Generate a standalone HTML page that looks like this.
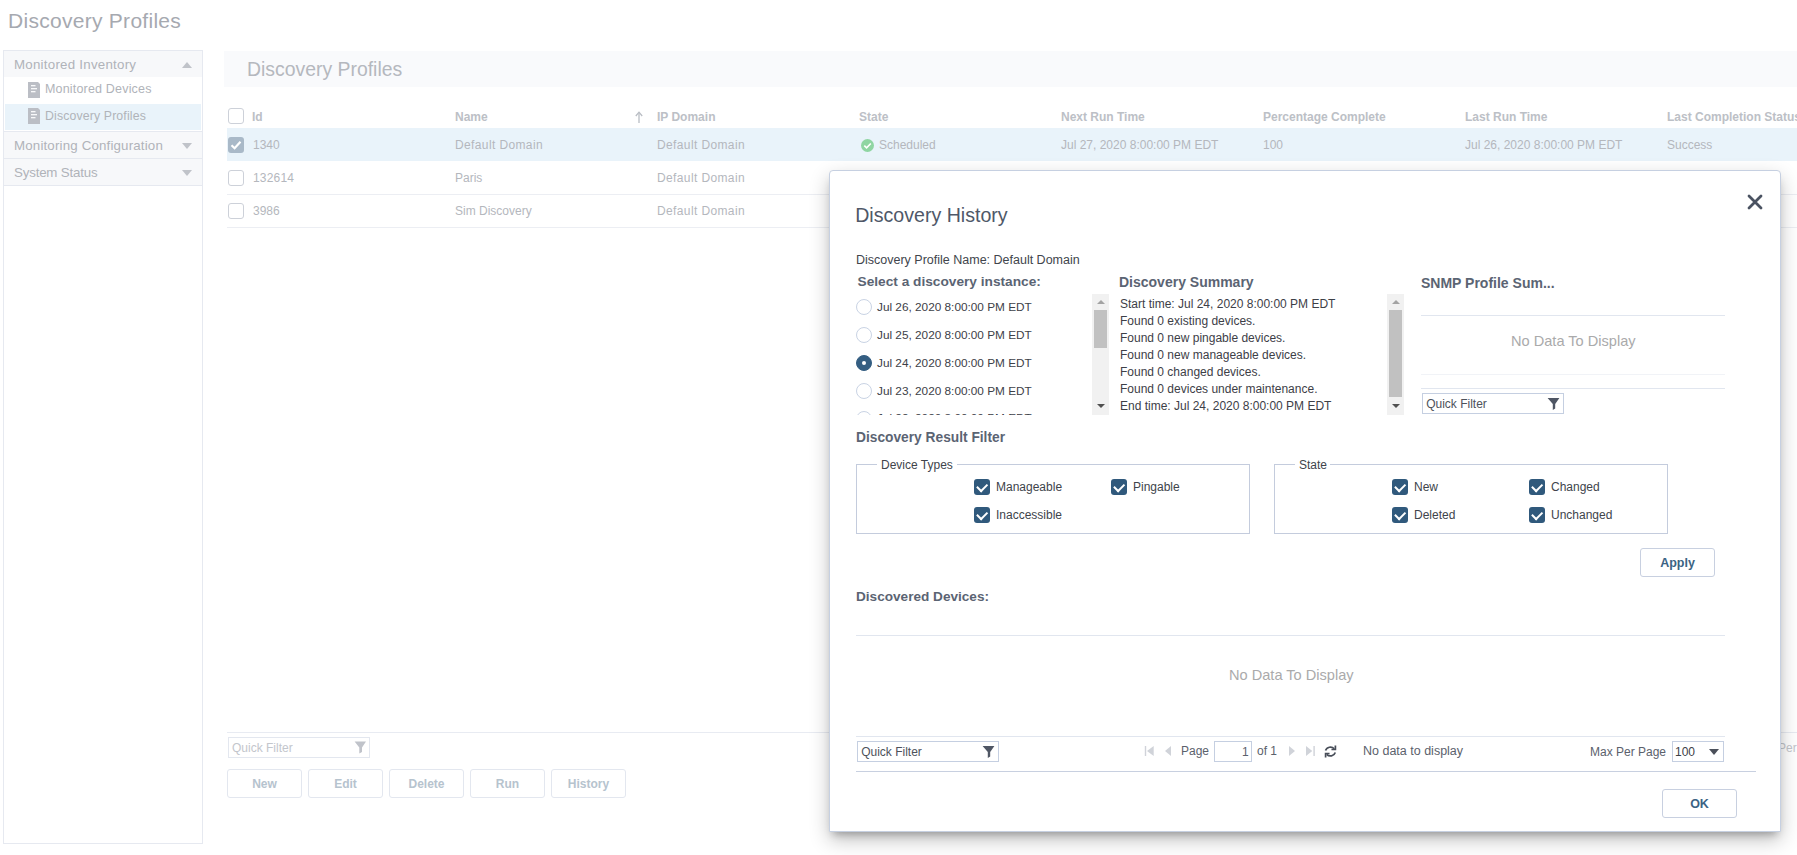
<!DOCTYPE html>
<html><head><meta charset="utf-8">
<style>
*{box-sizing:border-box;margin:0;padding:0}
html,body{width:1797px;height:855px;overflow:hidden;background:#fff;font-family:"Liberation Sans",sans-serif;position:relative}
.a{position:absolute}
.t{position:absolute;white-space:nowrap;line-height:1}
.bg{color:#b4b7bd}
.hd{color:#bcc0c6;font-weight:700}
.cb{position:absolute;width:16px;height:16px;border:1px solid #cdd1d9;border-radius:3px;background:#fff}
.hl{position:absolute;height:1px;background:#eceef3}
.doc{position:absolute;width:12px;height:16px;background:#c3c5cb;border-radius:1px}
.doc i{position:absolute;left:3px;height:2px;background:#fff}
.tri{position:absolute;width:0;height:0;border-left:5px solid transparent;border-right:5px solid transparent}
.btn{position:absolute;height:29px;border:1px solid #e3e7ef;border-radius:3px;color:#b6c3ce;font-weight:700;font-size:12px;text-align:center;line-height:28px;background:#fff}

.rd{position:absolute;width:16px;height:16px;border-radius:50%;border:1px solid #c9d3e4;background:#fff}
.rd.on{background:#345e82;border-color:#345e82}
.dt{font-size:11.8px;color:#3d4148}
.sb{position:absolute;width:17px;background:#f1f1f1}
.sb .th{position:absolute;left:2px;width:13px;background:#c1c1c1}
.sb .ua{position:absolute;left:4.5px;top:6px;width:0;height:0;border-left:4px solid transparent;border-right:4px solid transparent;border-bottom:4px solid #a3a3a3}
.sb .da{position:absolute;left:4.5px;bottom:7px;width:0;height:0;border-left:4px solid transparent;border-right:4px solid transparent;border-top:4px solid #505050}
.ml{position:absolute;height:1px;background:#e1e6ef}
.nd{font-size:14.6px;color:#aaaaab}
.qf{position:absolute;height:21px;border:1px solid #c5cfe1;background:#fff}
.qf span{position:absolute;left:3.2px;top:4.4px;font-size:12px;line-height:1;color:#4d525b;white-space:nowrap}
.qf .fi{position:absolute;right:2px;top:3px}
.fs{position:absolute;border:1px solid #c4ccdd}
.lb{font-size:12px;color:#40444b}
.ck{position:absolute;width:16px;height:16px;border-radius:3px;background:#30597c}
.ck:after{content:"";position:absolute;left:3px;top:3.5px;width:8px;height:4.5px;border-left:2.3px solid #fff;border-bottom:2.3px solid #fff;transform:rotate(-45deg)}
.mb{position:absolute;border:1px solid #c8d0e0;border-radius:3px;background:#fff;color:#3b6383;font-weight:700;font-size:12.5px;text-align:center;line-height:28px}
.pg{font-size:12px;color:#5b616c}
</style></head><body>

<!-- page title -->
<div class="t" style="left:8px;top:10px;font-size:21px;letter-spacing:0.28px;color:#a6a9b0">Discovery Profiles</div>

<!-- sidebar -->
<div class="a" style="left:3px;top:50px;width:200px;height:794px;border:1px solid #e6e9f0;background:#fff"></div>
<div class="a" style="left:4px;top:51px;width:198px;height:26px;background:#f7f8fa"></div>
<div class="t" style="left:14px;top:57.8px;font-size:13.3px;letter-spacing:0.25px;color:#b0b3b9">Monitored Inventory</div>
<div class="tri" style="left:182px;top:62px;border-bottom:6px solid #c0c3c9"></div>
<svg class="a" style="left:28px;top:82px" width="12" height="16" viewBox="0 0 12 16"><path d="M0 0 H10 L12 2 V16 H0 Z" fill="#bbbec5"/><rect x="3" y="3.1" width="4.5" height="1.2" fill="#fff"/><rect x="3" y="6.1" width="6" height="1.2" fill="#fff"/><rect x="3" y="9.1" width="4.5" height="1.2" fill="#fff"/></svg>
<div class="t" style="left:45px;top:83.4px;font-size:12.5px;letter-spacing:0.18px;color:#b0b3b9">Monitored Devices</div>
<div class="a" style="left:5px;top:104px;width:196px;height:26px;background:#e9f3fa"></div>
<svg class="a" style="left:28px;top:108px" width="12" height="16" viewBox="0 0 12 16"><path d="M0 0 H10 L12 2 V16 H0 Z" fill="#bbbec5"/><rect x="3" y="3.1" width="4.5" height="1.2" fill="#fff"/><rect x="3" y="6.1" width="6" height="1.2" fill="#fff"/><rect x="3" y="9.1" width="4.5" height="1.2" fill="#fff"/></svg>
<div class="t" style="left:45px;top:109.5px;font-size:12.3px;letter-spacing:0.14px;color:#b0b3b9">Discovery Profiles</div>
<div class="a" style="left:4px;top:131px;width:198px;height:1px;background:#e6e9f0"></div>
<div class="a" style="left:4px;top:132px;width:198px;height:26px;background:#f7f8fa"></div>
<div class="t" style="left:14px;top:138.6px;font-size:13.3px;letter-spacing:0.17px;color:#b0b3b9">Monitoring Configuration</div>
<div class="tri" style="left:182px;top:143px;border-top:6px solid #c0c3c9"></div>
<div class="a" style="left:4px;top:158px;width:198px;height:1px;background:#e6e9f0"></div>
<div class="a" style="left:4px;top:159px;width:198px;height:26px;background:#f7f8fa"></div>
<div class="t" style="left:14px;top:165.8px;font-size:13.3px;letter-spacing:-0.18px;color:#b0b3b9">System Status</div>
<div class="tri" style="left:182px;top:170px;border-top:6px solid #c0c3c9"></div>
<div class="a" style="left:4px;top:185px;width:198px;height:1px;background:#e6e9f0"></div>

<!-- main panel header -->
<div class="a" style="left:224px;top:51px;width:1573px;height:36px;background:#f9fafc"></div>
<div class="t" style="left:247px;top:59.6px;font-size:19.4px;color:#b5b8be">Discovery Profiles</div>

<!-- table header -->
<div class="cb" style="left:228px;top:108px"></div>
<div class="t hd" style="left:252px;top:110.8px;font-size:12px">Id</div>
<div class="t hd" style="left:455px;top:110.8px;font-size:12px">Name</div>
<svg class="a" style="left:634px;top:111px" width="10" height="13" viewBox="0 0 10 13"><path d="M5 1.5 V12" stroke="#b9bdc4" stroke-width="1.3"/><path d="M1.8 5 L5 1.2 L8.2 5" fill="none" stroke="#b9bdc4" stroke-width="1.3"/></svg>
<div class="t hd" style="left:657px;top:110.8px;font-size:12px">IP Domain</div>
<div class="t hd" style="left:859px;top:110.8px;font-size:12px">State</div>
<div class="t hd" style="left:1061px;top:110.8px;font-size:12px">Next Run Time</div>
<div class="t hd" style="left:1263px;top:110.8px;font-size:12px">Percentage Complete</div>
<div class="t hd" style="left:1465px;top:110.8px;font-size:12px">Last Run Time</div>
<div class="t hd" style="left:1667px;top:110.8px;font-size:12px">Last Completion Status</div>

<!-- rows -->
<div class="a" style="left:227px;top:128px;width:1570px;height:33px;background:#e9f3fa"></div>
<div class="a" style="left:228px;top:137px;width:16px;height:16px;border-radius:3px;background:#a9b9c8"></div>
<svg class="a" style="left:228px;top:137px" width="16" height="16" viewBox="0 0 16 16"><path d="M3.5 8.2 L6.6 11.2 L12.5 4.8" fill="none" stroke="#fff" stroke-width="2.2"/></svg>
<div class="t bg" style="left:253px;top:138.8px;font-size:12px">1340</div>
<div class="t bg" style="left:455px;top:138.8px;font-size:12px;letter-spacing:0.38px">Default Domain</div>
<div class="t bg" style="left:657px;top:138.8px;font-size:12px;letter-spacing:0.38px">Default Domain</div>
<div class="a" style="left:860.5px;top:138.5px;width:13px;height:13px;border-radius:50%;background:#8fd5a2"></div>
<svg class="a" style="left:860.5px;top:138.5px" width="13" height="13" viewBox="0 0 13 13"><path d="M3.3 6.6 L5.6 8.9 L9.8 4.5" fill="none" stroke="#fff" stroke-width="1.6"/></svg>
<div class="t bg" style="left:879px;top:138.8px;font-size:12px">Scheduled</div>
<div class="t bg" style="left:1061px;top:138.8px;font-size:12px">Jul 27, 2020 8:00:00 PM EDT</div>
<div class="t bg" style="left:1263px;top:138.8px;font-size:12px">100</div>
<div class="t bg" style="left:1465px;top:138.8px;font-size:12px">Jul 26, 2020 8:00:00 PM EDT</div>
<div class="t bg" style="left:1667px;top:138.8px;font-size:12px">Success</div>

<div class="cb" style="left:228px;top:170px"></div>
<div class="t bg" style="left:253px;top:171.8px;font-size:12px;letter-spacing:0.2px">132614</div>
<div class="t bg" style="left:455px;top:171.8px;font-size:12px">Paris</div>
<div class="t bg" style="left:657px;top:171.8px;font-size:12px;letter-spacing:0.38px">Default Domain</div>
<div class="hl" style="left:227px;top:194px;width:1570px"></div>

<div class="cb" style="left:228px;top:203px"></div>
<div class="t bg" style="left:253px;top:204.8px;font-size:12px">3986</div>
<div class="t bg" style="left:455px;top:204.8px;font-size:12px">Sim Discovery</div>
<div class="t bg" style="left:657px;top:204.8px;font-size:12px;letter-spacing:0.38px">Default Domain</div>
<div class="hl" style="left:227px;top:227px;width:1570px"></div>

<!-- bottom toolbar -->
<div class="hl" style="left:227px;top:732px;width:1570px;background:#e8ebf2"></div>
<div class="a" style="left:228px;top:737px;width:142px;height:21px;border:1px solid #e3e7ef"></div>
<div class="t" style="left:232px;top:742px;font-size:12px;color:#c3c6cc">Quick Filter</div><svg class="a" style="left:354px;top:741px" width="13" height="13" viewBox="0 0 13 13"><path d="M0.6 0.6 H12 L8 6.5 V11 L5.3 12.6 V6.5 Z" fill="#c0c3ca"/></svg>
<div class="t" style="left:1778px;top:742px;font-size:12px;color:#c3c6cc">Per</div>

<div class="btn" style="left:227px;top:769px;width:75px">New</div>
<div class="btn" style="left:308px;top:769px;width:75px">Edit</div>
<div class="btn" style="left:389px;top:769px;width:75px">Delete</div>
<div class="btn" style="left:470px;top:769px;width:75px">Run</div>
<div class="btn" style="left:551px;top:769px;width:75px">History</div>


<!-- MODAL -->
<div class="a" style="left:829px;top:170px;width:952px;height:662px;background:#fff;border:1px solid #c6d0e1;border-radius:4px 4px 0 0;box-shadow:0 8px 20px rgba(0,0,0,0.24),0 6px 8px -4px rgba(0,0,0,0.28)"></div>
<svg class="a" style="left:1746px;top:193px" width="18" height="18" viewBox="0 0 18 18"><path d="M3 3 L15 15 M15 3 L3 15" stroke="#4a5261" stroke-width="2.8" stroke-linecap="round"/></svg>
<div class="t" style="left:855.2px;top:206.4px;font-size:19.6px;color:#4f5868">Discovery History</div>
<div class="t" style="left:856px;top:254.2px;font-size:12.5px;color:#41454c">Discovery Profile Name: Default Domain</div>
<div class="t" style="left:857.5px;top:275.2px;font-size:13.7px;font-weight:700;color:#5b6473">Select a discovery instance:</div>

<!-- radio list -->
<div class="a" style="left:850px;top:294px;width:240px;height:121px;overflow:hidden">
  <div class="rd" style="left:6px;top:5px"></div>
  <div class="t dt" style="left:27px;top:7.9px">Jul 26, 2020 8:00:00 PM EDT</div>
  <div class="rd" style="left:6px;top:33px"></div>
  <div class="t dt" style="left:27px;top:35.9px">Jul 25, 2020 8:00:00 PM EDT</div>
  <div class="rd on" style="left:6px;top:61px"></div>
  <div class="a" style="left:12px;top:67px;width:4.4px;height:4.4px;border-radius:50%;background:#fff;left:11.8px;top:66.8px"></div>
  <div class="t dt" style="left:27px;top:63.9px">Jul 24, 2020 8:00:00 PM EDT</div>
  <div class="rd" style="left:6px;top:89px"></div>
  <div class="t dt" style="left:27px;top:91.9px">Jul 23, 2020 8:00:00 PM EDT</div>
  <div class="rd" style="left:6px;top:117px"></div>
  <div class="t dt" style="left:27px;top:119px">Jul 22, 2020 8:00:00 PM EDT</div>
</div>
<div class="sb" style="left:1092px;top:294px;height:121px"><div class="th" style="top:16px;height:38px"></div><div class="ua"></div><div class="da"></div></div>

<!-- summary -->
<div class="t" style="left:1119px;top:275.2px;font-size:14px;font-weight:700;color:#5b6473">Discovery Summary</div>
<div class="a" style="left:1120px;top:295.8px;font-size:12px;line-height:17px;color:#3d4047;white-space:nowrap">Start time: Jul 24, 2020 8:00:00 PM EDT<br>Found 0 existing devices.<br>Found 0 new pingable devices.<br>Found 0 new manageable devices.<br>Found 0 changed devices.<br>Found 0 devices under maintenance.<br>End time: Jul 24, 2020 8:00:00 PM EDT</div>
<div class="sb" style="left:1387px;top:294px;height:121px"><div class="th" style="top:16px;height:87px"></div><div class="ua"></div><div class="da"></div></div>

<!-- SNMP -->
<div class="t" style="left:1421px;top:275.5px;font-size:14px;font-weight:700;color:#5b6473">SNMP Profile Sum...</div>
<div class="ml" style="left:1421px;top:315px;width:304px"></div>
<div class="t nd" style="left:1511px;top:333.6px">No Data To Display</div>
<div class="ml" style="left:1421px;top:374px;width:304px;background:#f1f3f7"></div>
<div class="ml" style="left:1421px;top:388px;width:304px"></div>
<div class="qf" style="left:1422px;top:393px;width:142px"><span>Quick Filter</span><svg class="fi" width="14" height="14" viewBox="0 0 14 14"><path d="M0.6 1 H12.4 L8.2 7 V11.6 L5.8 13 V7 Z" fill="#4f5664"/></svg></div>

<!-- filter -->
<div class="t" style="left:856px;top:431.1px;font-size:13.75px;font-weight:700;color:#5b6473">Discovery Result Filter</div>
<div class="fs" style="left:856px;top:464px;width:394px;height:70px"></div>
<div class="a" style="left:877px;top:460px;width:80px;height:8px;background:#fff"></div>
<div class="t lb" style="left:881px;top:458.8px">Device Types</div>
<div class="ck" style="left:974px;top:479px"></div><div class="t lb" style="left:996px;top:480.8px">Manageable</div>
<div class="ck" style="left:1111px;top:479px"></div><div class="t lb" style="left:1133px;top:480.8px">Pingable</div>
<div class="ck" style="left:974px;top:507px"></div><div class="t lb" style="left:996px;top:508.8px">Inaccessible</div>

<div class="fs" style="left:1274px;top:464px;width:394px;height:70px"></div>
<div class="a" style="left:1295px;top:460px;width:35px;height:8px;background:#fff"></div>
<div class="t lb" style="left:1299px;top:458.8px">State</div>
<div class="ck" style="left:1392px;top:479px"></div><div class="t lb" style="left:1414px;top:480.8px">New</div>
<div class="ck" style="left:1529px;top:479px"></div><div class="t lb" style="left:1551px;top:480.8px">Changed</div>
<div class="ck" style="left:1392px;top:507px"></div><div class="t lb" style="left:1414px;top:508.8px">Deleted</div>
<div class="ck" style="left:1529px;top:507px"></div><div class="t lb" style="left:1551px;top:508.8px">Unchanged</div>

<div class="mb" style="left:1640px;top:548px;width:75px;height:29px">Apply</div>

<!-- discovered devices -->
<div class="t" style="left:856px;top:590px;font-size:13.6px;font-weight:700;color:#5b6473">Discovered Devices:</div>
<div class="ml" style="left:856px;top:635px;width:869px"></div>
<div class="t nd" style="left:1229px;top:667.8px">No Data To Display</div>
<div class="ml" style="left:856px;top:736px;width:869px"></div>
<div class="qf" style="left:857px;top:741px;width:142px"><span>Quick Filter</span><svg class="fi" width="14" height="14" viewBox="0 0 14 14"><path d="M0.6 1 H12.4 L8.2 7 V11.6 L5.8 13 V7 Z" fill="#4f5664"/></svg></div>

<!-- pager -->
<svg class="a" style="left:1140px;top:744px" width="200" height="16" viewBox="0 0 200 16">
 <rect x="4.8" y="2" width="1.4" height="10" fill="#d0d3d9"/><path d="M7 7 L13.7 2 V12 Z" fill="#d0d3d9"/>
 <path d="M25 7 L31 2 V12 Z" fill="#d0d3d9"/>
 <path d="M149 2 V12 L155 7 Z" fill="#d0d3d9"/>
 <path d="M166 2 V12 L172.3 7 Z" fill="#d0d3d9"/><rect x="173.4" y="2" width="1.4" height="10" fill="#d0d3d9"/>
</svg>
<div class="t pg" style="left:1181px;top:744.7px">Page</div>
<div class="a" style="left:1214px;top:741px;width:38px;height:21px;border:1px solid #c5cfe1"></div>
<div class="t pg" style="left:1242px;top:745.8px">1</div>
<div class="t pg" style="left:1257px;top:744.7px">of 1</div>
<svg class="a" style="left:1320px;top:742px" width="22" height="20" viewBox="0 0 22 20"><path d="M5.5 8.6 A5.1 5.1 0 0 1 14.2 6.9" fill="none" stroke="#484e59" stroke-width="1.7"/><path d="M15.4 4.4 V7.5 H12.3" fill="none" stroke="#484e59" stroke-width="1.7" stroke-linecap="square"/><path d="M15.3 10.4 A5.1 5.1 0 0 1 6.7 12.3" fill="none" stroke="#484e59" stroke-width="1.7"/><path d="M5.6 14.6 V11.5 H8.7" fill="none" stroke="#484e59" stroke-width="1.7" stroke-linecap="square"/></svg>
<div class="t pg" style="left:1363px;top:744.7px;font-size:12.5px">No data to display</div>
<div class="t pg" style="left:1590px;top:745.5px">Max Per Page</div>
<div class="a" style="left:1672px;top:741px;width:52px;height:21px;border:1px solid #c5cfe1"></div>
<div class="t pg" style="left:1675px;top:745.5px;color:#3d4047">100</div>
<div class="tri" style="left:1709px;top:749px;border-left-width:5px;border-right-width:5px;border-top:6px solid #4b505a"></div>
<div class="ml" style="left:856px;top:771px;width:900px;background:#c8d0e0"></div>

<div class="mb" style="left:1662px;top:789px;width:75px;height:29px">OK</div>

</body></html>
